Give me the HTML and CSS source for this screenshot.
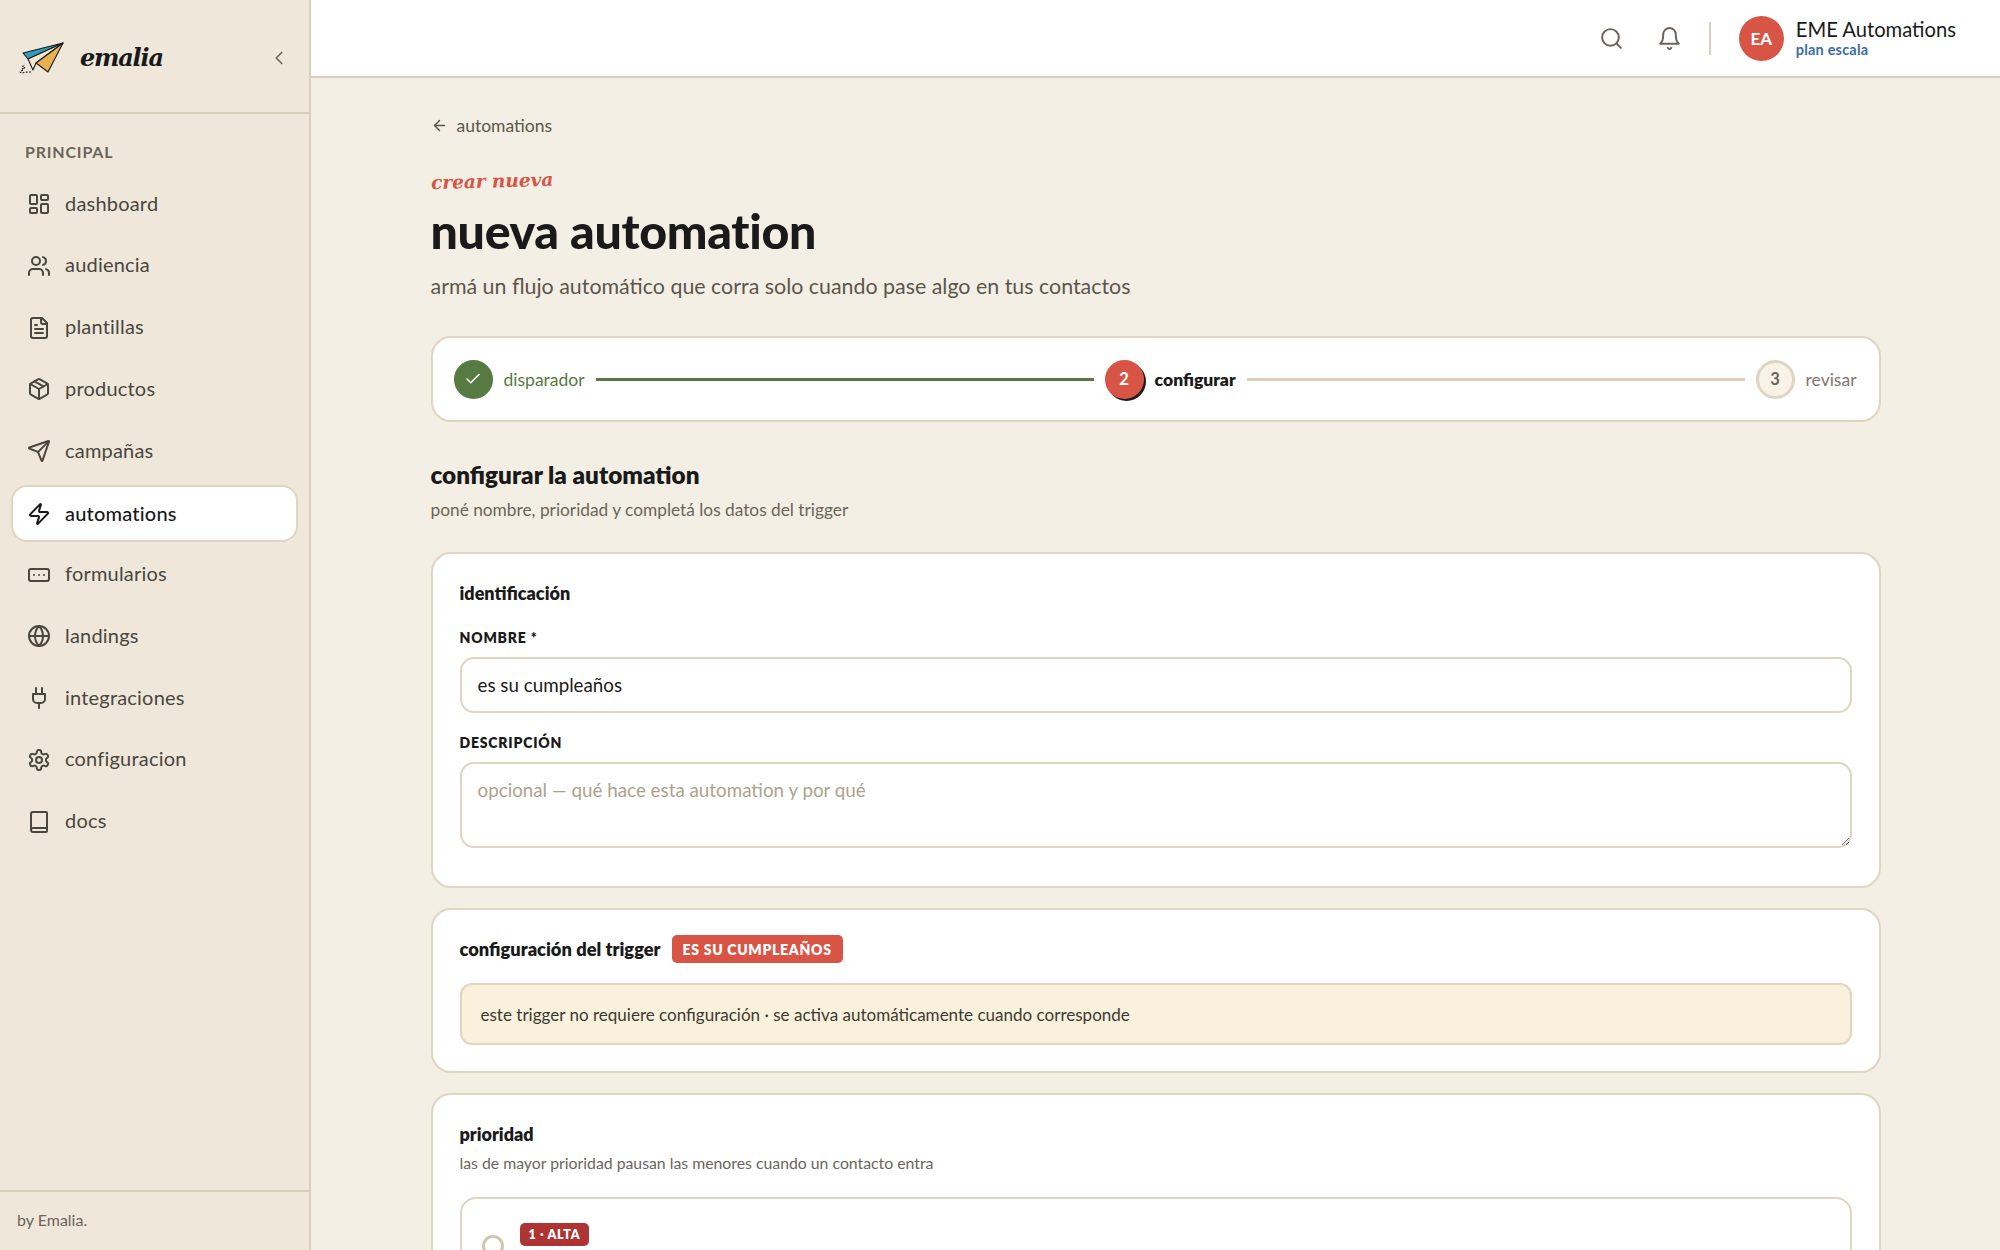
FILE: index.html
```html
<!DOCTYPE html>
<html lang="es">
<head>
  <meta charset="UTF-8" />
  <meta name="viewport" content="width=device-width, initial-scale=1.0" />
  <title>nueva automation</title>
  <link rel="stylesheet" href="styles.css">
</head>
<body>
  <aside class="sidebar">
    <div class="brand">
      <svg class="brand-logo" viewBox="0 0 46 34" fill="none" stroke="#1a1a1a" stroke-width="1.1" stroke-linejoin="round">
        <path d="M5 13 45 3 10 19Z" fill="#2f9cc0" />
        <path d="M10 19 45 3 18 23 15 30Z" fill="#f3e6d0" />
        <path d="M18 23 45 3 30 32Z" fill="#e9b04f" />
        <path d="M13 32H9c-4 1-7 1-7 0 3-2 6-5 4-6-2 0-2 2-1 3" stroke-dasharray="2 1.2" />
      </svg>
      <span class="brand-name">emalia</span>
      <svg class="icon brand-toggle" viewBox="0 0 24 24"><path d="m15 18-6-6 6-6" /></svg>
    </div>

    <div class="nav-title">PRINCIPAL</div>
    <nav class="nav">
      <a class="nav-item">
        <svg class="icon" viewBox="0 0 24 24"><rect x="3" y="3" width="7" height="9" rx="1" /><rect x="14" y="3" width="7" height="5" rx="1" /><rect x="14" y="12" width="7" height="9" rx="1" /><rect x="3" y="16" width="7" height="5" rx="1" /></svg>
        dashboard
      </a>
      <a class="nav-item">
        <svg class="icon" viewBox="0 0 24 24"><path d="M16 21v-2a4 4 0 0 0-4-4H6a4 4 0 0 0-4 4v2" /><circle cx="9" cy="7" r="4" /><path d="M22 21v-2a4 4 0 0 0-3-3.87" /><path d="M16 3.13a4 4 0 0 1 0 7.75" /></svg>
        audiencia
      </a>
      <a class="nav-item">
        <svg class="icon" viewBox="0 0 24 24"><path d="M15 2H6a2 2 0 0 0-2 2v16a2 2 0 0 0 2 2h12a2 2 0 0 0 2-2V7Z" /><path d="M14 2v4a2 2 0 0 0 2 2h4" /><path d="M10 9H8" /><path d="M16 13H8" /><path d="M16 17H8" /></svg>
        plantillas
      </a>
      <a class="nav-item">
        <svg class="icon" viewBox="0 0 24 24"><path d="M11 21.73a2 2 0 0 0 2 0l7-4A2 2 0 0 0 21 16V8a2 2 0 0 0-1-1.73l-7-4a2 2 0 0 0-2 0l-7 4A2 2 0 0 0 3 8v8a2 2 0 0 0 1 1.73z" /><path d="M12 22V12" /><path d="M3.29 7 12 12l8.71-5" /><path d="m7.5 4.27 9 5.15" /></svg>
        productos
      </a>
      <a class="nav-item">
        <svg class="icon" viewBox="0 0 24 24"><path d="M14.536 21.686a.5.5 0 0 0 .937-.024l6.5-19a.496.496 0 0 0-.635-.635l-19 6.5a.5.5 0 0 0-.024.937l7.93 3.18a2 2 0 0 1 1.112 1.11z" /><path d="m21.854 2.147-10.94 10.939" /></svg>
        campañas
      </a>
      <a class="nav-item active">
        <svg class="icon" viewBox="0 0 24 24"><path d="M4 14a1 1 0 0 1-.78-1.63l9.9-10.2a.5.5 0 0 1 .86.46l-1.92 6.02A1 1 0 0 0 13 10h7a1 1 0 0 1 .78 1.63l-9.9 10.2a.5.5 0 0 1-.86-.46l1.92-6.02A1 1 0 0 0 11 14z" /></svg>
        automations
      </a>
      <a class="nav-item">
        <svg class="icon" viewBox="0 0 24 24"><rect x="2" y="6" width="20" height="12" rx="2" /><path d="M12 12h.01" /><path d="M17 12h.01" /><path d="M7 12h.01" /></svg>
        formularios
      </a>
      <a class="nav-item">
        <svg class="icon" viewBox="0 0 24 24"><circle cx="12" cy="12" r="10" /><path d="M12 2a14.5 14.5 0 0 0 0 20 14.5 14.5 0 0 0 0-20" /><path d="M2 12h20" /></svg>
        landings
      </a>
      <a class="nav-item">
        <svg class="icon" viewBox="0 0 24 24"><path d="M12 22v-5" /><path d="M9 8V2" /><path d="M15 8V2" /><path d="M18 8v5a4 4 0 0 1-4 4h-4a4 4 0 0 1-4-4V8Z" /></svg>
        integraciones
      </a>
      <a class="nav-item">
        <svg class="icon" viewBox="0 0 24 24"><path d="M12.22 2h-.44a2 2 0 0 0-2 2v.18a2 2 0 0 1-1 1.73l-.43.25a2 2 0 0 1-2 0l-.15-.08a2 2 0 0 0-2.73.73l-.22.38a2 2 0 0 0 .73 2.73l.15.1a2 2 0 0 1 1 1.72v.51a2 2 0 0 1-1 1.74l-.15.09a2 2 0 0 0-.73 2.73l.22.38a2 2 0 0 0 2.73.73l.15-.08a2 2 0 0 1 2 0l.43.25a2 2 0 0 1 1 1.73V20a2 2 0 0 0 2 2h.44a2 2 0 0 0 2-2v-.18a2 2 0 0 1 1-1.73l.43-.25a2 2 0 0 1 2 0l.15.08a2 2 0 0 0 2.73-.73l.22-.39a2 2 0 0 0-.73-2.73l-.15-.08a2 2 0 0 1-1-1.74v-.5a2 2 0 0 1 1-1.74l.15-.09a2 2 0 0 0 .73-2.73l-.22-.38a2 2 0 0 0-2.73-.73l-.15.08a2 2 0 0 1-2 0l-.43-.25a2 2 0 0 1-1-1.73V4a2 2 0 0 0-2-2z" /><circle cx="12" cy="12" r="3" /></svg>
        configuracion
      </a>
      <a class="nav-item">
        <svg class="icon" viewBox="0 0 24 24"><path d="M4 20V4a2 2 0 0 1 2-2h13a1 1 0 0 1 1 1v18a1 1 0 0 1-1 1H6a2 2 0 0 1-2-2 2 2 0 0 1 2-2h14" /></svg>
        docs
      </a>
    </nav>

    <div class="sidebar-foot">by Emalia.</div>
  </aside>

  <div class="main">
    <header class="topbar">
      <svg class="icon topbar-icon" viewBox="0 0 24 24"><circle cx="11" cy="11" r="8" /><path d="m21 21-4.3-4.3" /></svg>
      <svg class="icon topbar-icon" viewBox="0 0 24 24"><path d="M6 8a6 6 0 0 1 12 0c0 7 3 9 3 9H3s3-2 3-9" /><path d="M10.3 21a1.94 1.94 0 0 0 3.4 0" /></svg>
      <span class="topbar-sep"></span>
      <div class="avatar">EA</div>
      <div class="account">
        <div class="account-name">EME Automations</div>
        <div class="account-plan">plan escala</div>
      </div>
    </header>

    <main class="content">
      <a class="back-link">
        <svg class="icon" viewBox="0 0 24 24"><path d="m12 19-7-7 7-7" /><path d="M19 12H5" /></svg>
        automations
      </a>
      <div class="eyebrow">crear nueva</div>
      <h1 class="page-title">nueva automation</h1>
      <p class="page-sub">armá un flujo automático que corra solo cuando pase algo en tus contactos</p>

      <div class="stepper">
        <div class="step done">
          <span class="step-dot"><svg class="icon" viewBox="0 0 24 24"><path d="M20 6 9 17l-5-5" /></svg></span>
          disparador
        </div>
        <span class="step-line done"></span>
        <div class="step current">
          <span class="step-dot">2</span>
          configurar
        </div>
        <span class="step-line"></span>
        <div class="step">
          <span class="step-dot">3</span>
          revisar
        </div>
      </div>

      <h2 class="section-title">configurar la automation</h2>
      <p class="section-sub">poné nombre, prioridad y completá los datos del trigger</p>

      <section class="card">
        <h3 class="card-title">identificación</h3>
        <label class="field-label">NOMBRE *</label>
        <input class="field-input" type="text" value="es su cumpleaños" />
        <label class="field-label">DESCRIPCIÓN</label>
        <textarea class="field-input field-area" placeholder="opcional — qué hace esta automation y por qué"></textarea>
      </section>

      <section class="card">
        <div class="card-head">
          <h3 class="card-title">configuración del trigger</h3>
          <span class="tag">ES SU CUMPLEAÑOS</span>
        </div>
        <div class="notice">este trigger no requiere configuración · se activa automáticamente cuando corresponde</div>
      </section>

      <section class="card">
        <h3 class="card-title">prioridad</h3>
        <p class="card-sub">las de mayor prioridad pausan las menores cuando un contacto entra</p>
        <div class="option">
          <span class="radio"></span>
          <span class="tag tag-dark">1 · ALTA</span>
        </div>
      </section>
    </main>
  </div>
</body>
</html>
```

FILE: styles.css
```css
* {
  box-sizing: border-box;
}

html,
body {
  height: 100%;
  overflow: hidden;
}

body {
  display: flex;
  margin: 0;
  font-family: "Lato", "Noto Sans", sans-serif;
  color: #1a1a1a;
  background: #f4efe4;
}

.icon {
  width: 24px;
  height: 24px;
  flex: none;
  fill: none;
  stroke: currentColor;
  stroke-width: 2;
  stroke-linecap: round;
  stroke-linejoin: round;
}

/* sidebar */
.sidebar {
  width: 311px;
  flex: none;
  display: flex;
  flex-direction: column;
  background: #efe8da;
  border-right: 2px solid #d9cfba;
}

.brand {
  height: 114px;
  flex: none;
  display: flex;
  align-items: center;
  padding: 3px 0 0 18px;
  border-bottom: 2px solid #d9cfba;
}

.brand-logo {
  width: 46px;
  height: 34px;
  margin-top: -2px;
}

.brand-name {
  margin-left: 16px;
  font-family: "DejaVu Serif", serif;
  font-style: italic;
  font-weight: 700;
  font-size: 24px;
  letter-spacing: -1.2px;
}

.brand-toggle {
  margin-left: auto;
  margin-right: 19px;
  width: 22px;
  height: 22px;
  color: #6b655a;
  stroke-width: 1.8;
}

.nav-title {
  margin: 29px 0 0 25px;
  font-size: 16px;
  line-height: 18px;
  font-weight: 700;
  letter-spacing: 0.8px;
  color: #6b655a;
}

.nav {
  display: flex;
  flex-direction: column;
  gap: 5.75px;
  margin-top: 14px;
  padding: 0 11px;
}

.nav-item {
  height: 56px;
  flex: none;
  display: flex;
  align-items: center;
  gap: 14px;
  padding: 0 15px 1px;
  border: 1px solid transparent;
  border-radius: 16px;
  font-size: 20px;
  letter-spacing: 0.2px;
  color: #4a4640;
}

.nav-item .icon {
  margin-top: 3px;
}

.nav-item.active {
  height: 57px;
  margin: 1px 0 -2px;
  background: #fff;
  border: 2px solid #dfd5c0;
  padding: 0 14px 1px;
  font-weight: 500;
  color: #1a1a1a;
}

.sidebar-foot {
  margin-top: auto;
  height: 60px;
  display: flex;
  align-items: center;
  padding: 0 0 4px 17px;
  border-top: 2px solid #d9cfba;
  font-size: 16px;
  color: #6b655a;
}

/* main */
.main {
  flex: 1;
  min-width: 0;
}

.topbar {
  height: 78px;
  display: flex;
  align-items: center;
  padding-right: 44px;
  justify-content: flex-end;
  background: #fff;
  border-bottom: 2px solid #d9cfba;
}

.topbar-icon {
  width: 25px;
  height: 25px;
  margin-right: 33px;
  stroke-width: 1.9;
  color: #6b655a;
}

.topbar-sep {
  width: 2px;
  height: 33px;
  margin: 0 28px 0 -6px;
  background: #d9cfba;
}

.avatar {
  width: 45px;
  height: 45px;
  display: flex;
  align-items: center;
  justify-content: center;
  border-radius: 50%;
  background: #d85444;
  color: #fff;
  font-size: 17px;
  font-weight: 700;
}

.account {
  margin-left: 12px;
  padding-bottom: 3px;
}

.account-name {
  font-size: 20.2px;
  line-height: 26px;
}

.account-plan {
  font-size: 14.5px;
  line-height: 16px;
  font-weight: 700;
  letter-spacing: 0.2px;
  color: #3b6ea5;
}

.content {
  width: 1450px;
  margin: 0 auto;
  padding-top: 36px;
}

.back-link {
  display: flex;
  align-items: center;
  gap: 9px;
  height: 22px;
  font-size: 17.5px;
  color: #5b564c;
}

.back-link .icon {
  width: 17px;
  height: 17px;
}

.eyebrow {
  margin-top: 34px;
  height: 26px;
  font-family: "DejaVu Serif", serif;
  font-style: italic;
  font-weight: 700;
  font-size: 18.5px;
  line-height: 26px;
  color: #d85444;
  transform: rotate(-1.5deg);
  transform-origin: left center;
}

.page-title {
  margin: 7px 0 0;
  font-size: 48.3px;
  line-height: 54px;
  font-weight: 900;
  letter-spacing: -0.3px;
}

.page-sub {
  margin: 15px 0 0;
  font-size: 21.4px;
  line-height: 28px;
  color: #5b564c;
}

/* stepper */
.stepper {
  height: 86px;
  margin-top: 36px;
  display: flex;
  align-items: center;
  gap: 11px;
  padding: 0 22px 0 21px;
  background: #fff;
  border: 2px solid #dfd5c0;
  border-radius: 20px;
}

.step {
  display: flex;
  align-items: center;
  gap: 11px;
  font-size: 17.5px;
  color: #7d776b;
}

.step-dot {
  width: 39px;
  height: 39px;
  display: flex;
  align-items: center;
  justify-content: center;
  border-radius: 50%;
  border: 3px solid #dfd5c0;
  background: #f8f3e6;
  font-size: 16.5px;
  font-weight: 700;
  color: #6b655a;
}

.step.done {
  color: #567a41;
}

.step.done .step-dot {
  background: #567a41;
  border-color: #567a41;
  color: #fff;
}

.step.done .icon {
  width: 18px;
  height: 18px;
}

.step.current {
  font-weight: 800;
  color: #1a1a1a;
}

.step.current .step-dot {
  background: #d85444;
  border-color: #d85444;
  color: #fff;
  box-shadow: 2px 2px 0 #1a1a1a;
}

.step-line {
  flex: 1;
  height: 3px;
  background: #d9cfba;
}

.step-line.done {
  background: #567a41;
}

.section-title {
  margin: 38px 0 0;
  font-size: 24.3px;
  line-height: 30px;
  font-weight: 800;
}

.section-sub {
  margin: 9px 0 0;
  font-size: 17.3px;
  line-height: 22px;
  color: #6b655a;
}

/* cards */
.card {
  margin-bottom: 20px;
  padding: 27px 27px 38px;
  background: #fff;
  border: 2px solid #dfd5c0;
  border-radius: 20px;
}

.section-sub + .card {
  margin-top: 31px;
}

.card-title {
  margin: 0;
  font-size: 18px;
  line-height: 24px;
  font-weight: 800;
}

.card-sub {
  margin: 6px 0 0;
  font-size: 15.8px;
  line-height: 22px;
  color: #6b655a;
}

.card-head {
  display: flex;
  align-items: center;
  gap: 11px;
  margin-top: -2px;
}

.card-head .card-title {
  font-size: 18.3px;
}

.field-label {
  display: block;
  margin: 24px 0 10px;
  font-size: 14px;
  line-height: 18px;
  font-weight: 800;
  letter-spacing: 0.8px;
}

.field-input {
  display: block;
  width: 100%;
  height: 56px;
  padding: 0 16px 2px;
  background: #fff;
  border: 2px solid #dfd5c0;
  border-radius: 14px;
  font-family: inherit;
  font-size: 18.8px;
  color: #1a1a1a;
  outline: none;
}

.field-area {
  height: 86px;
  padding: 14px 16px;
}

.field-area::placeholder {
  color: #aba38d;
  opacity: 1;
}

.field-input + .field-label {
  margin-top: 21px;
}

.tag {
  display: inline-flex;
  align-items: center;
  height: 28px;
  padding: 0 11px;
  border-radius: 5px;
  background: #d85444;
  color: #fff;
  font-size: 14px;
  font-weight: 800;
  letter-spacing: 0.7px;
}

.tag-dark {
  height: 23px;
  padding: 0 9px;
  background: #ae3333;
  font-size: 12.5px;
}

.notice {
  height: 62px;
  margin-top: 20px;
  display: flex;
  align-items: center;
  padding: 0 19px;
  background: #faf1dc;
  border: 2px solid #dfd5c0;
  border-radius: 12px;
  font-size: 17.05px;
  color: #3d3a34;
}

.card-head + .notice {
  margin-bottom: -12px;
}

.option {
  display: flex;
  gap: 16px;
  height: 120px;
  margin-top: 23px;
  padding: 24px 20px;
  border: 2px solid #dfd5c0;
  border-radius: 16px;
}

.radio {
  width: 22px;
  height: 22px;
  margin-top: 12px;
  border: 3px solid #cfc6ad;
  border-radius: 50%;
}
```
